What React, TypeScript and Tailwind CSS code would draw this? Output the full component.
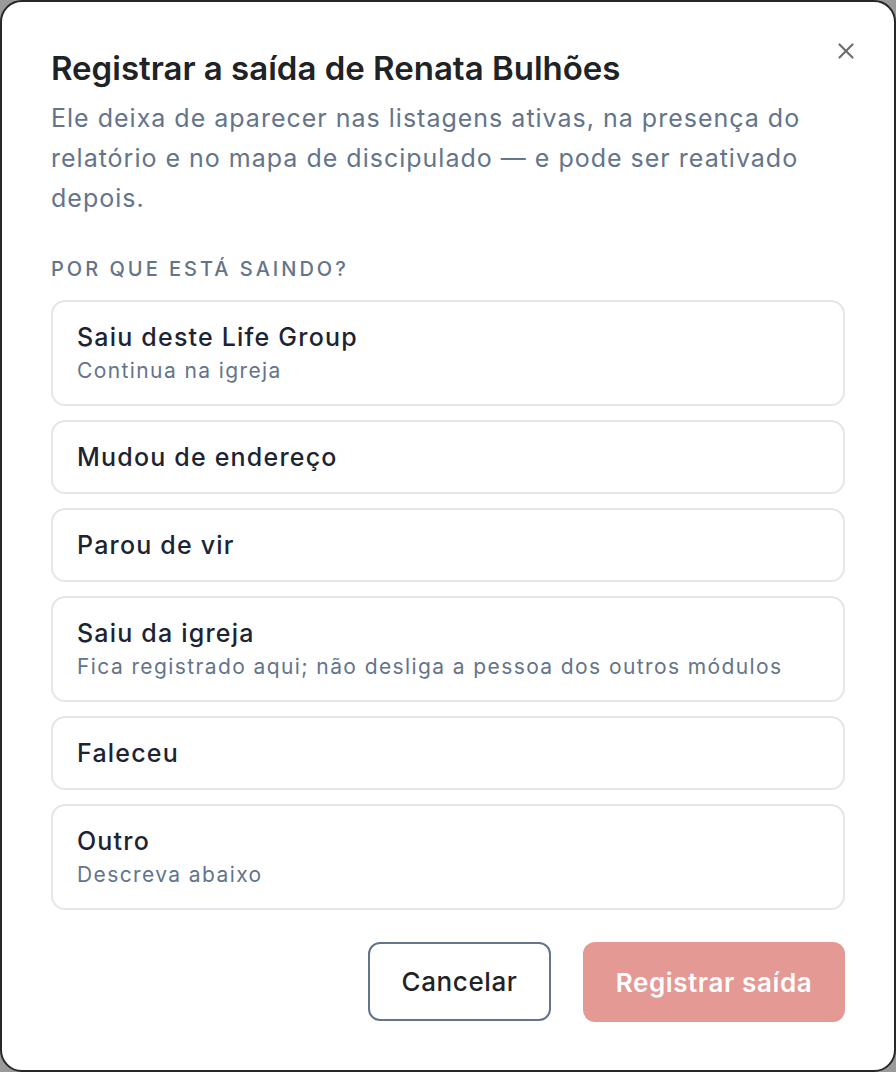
import { X } from 'lucide-react';

const reasons = [
  { title: 'Saiu deste Life Group', hint: 'Continua na igreja' },
  { title: 'Mudou de endereço' },
  { title: 'Parou de vir' },
  { title: 'Saiu da igreja', hint: 'Fica registrado aqui; não desliga a pessoa dos outros módulos' },
  { title: 'Faleceu' },
  { title: 'Outro', hint: 'Descreva abaixo' },
];

export default function App() {
  return (
    <div className="h-[1072px] w-[896px] bg-[#9a9a9a] font-['Inter',sans-serif]">
      <div className="relative flex h-full w-full flex-col rounded-[22px] border-2 border-[#24282a] bg-white px-[49px] pt-[44px]">
        <button className="absolute right-[35px] top-[36px] text-[#6b6f75]">
          <X size={26} strokeWidth={2} />
        </button>

        <h2 className="text-[33px] font-semibold leading-[44px] tracking-[0px] text-[#1f2326]">
          Registrar a saída de Renata Bulhões
        </h2>
        <p className="mt-[8px] text-[25px] leading-[40px] tracking-[1px] text-[#64748b]">
          Ele deixa de aparecer nas listagens ativas, na presença do relatório e no mapa de discipulado — e pode ser
          reativado depois.
        </p>

        <div className="mt-[37px] text-[20px] font-medium uppercase leading-[28px] tracking-[3px] text-[#64748b]">
          Por que está saindo?
        </div>

        <div className="mt-[17px] flex flex-col gap-[14px]">
          {reasons.map((r) => (
            <button
              key={r.title}
              className="flex flex-col items-start rounded-[14px] border-2 border-[#e4e6ea] bg-white px-[24px] py-[17px] text-left"
            >
              <span className="text-[25px] font-medium leading-[36px] tracking-[1.2px] text-[#1c2434]">{r.title}</span>
              {r.hint && <span className="text-[21px] leading-[32px] tracking-[1.4px] text-[#64748b]">{r.hint}</span>}
            </button>
          ))}
        </div>

        <div className="mt-[32px] flex justify-end gap-[32px]">
          <button className="h-[79px] w-[183px] rounded-[12px] border-2 border-[#64748b] text-[26px] font-medium tracking-[0.6px] text-[#1f2326]">
            Cancelar
          </button>
          <button className="h-[80px] w-[262px] rounded-[12px] bg-[#e59995] text-[26px] font-semibold tracking-[0.6px] text-white">
            Registrar saída
          </button>
        </div>
      </div>
    </div>
  );
}
